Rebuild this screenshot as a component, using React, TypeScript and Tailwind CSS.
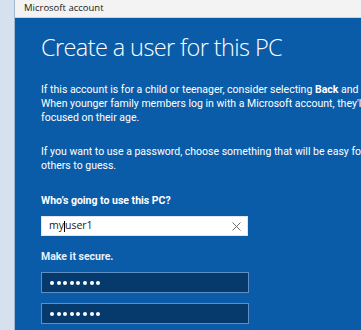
import React from "react";

function Dots() {
  return (
    <div className="flex gap-[2.6px]">
      {[0, 1, 2, 3, 4, 5, 6, 7].map((i) => (
        <span key={i} className="block w-[4px] h-[4px] rounded-full bg-white" />
      ))}
    </div>
  );
}

export default function App() {
  const font = { fontFamily: '"Open Sans", "Noto Sans", sans-serif' };
  const body = { fontFamily: 'Roboto, "Open Sans", sans-serif' };
  return (
    <div className="w-[361px] h-[330px] overflow-hidden flex bg-[#0b5ca8]" style={font}>
      <div className="w-[15px] shrink-0 bg-[#d5e1ee] border-r border-[#9fb7d1]" />
      <div className="flex-1 flex flex-col min-w-0">
        <div className="h-[18px] shrink-0 bg-[#f2f3f2] border-b border-[#bcd6ee] flex items-center pl-[9px] text-[9.5px] text-[#1a1a1a]">
          Microsoft account
        </div>
        <div className="flex-1 pl-[26px] pt-[14px] text-white whitespace-nowrap">
          <div className="text-[23.5px] font-light leading-[30px] tracking-[-0.6px]">Create a user for this PC</div>
          <div className="mt-[21px] text-[10.5px] leading-[14px]" style={body}>
            <div>
              If this account is for a child or teenager, consider selecting <b>Back</b> and create
            </div>
            <div>When younger family members log in with a Microsoft account, they'll get</div>
            <div>focused on their age.</div>
          </div>
          <div className="mt-[20px] text-[10.5px] leading-[14px]" style={body}>
            <div>If you want to use a password, choose something that will be easy for you to remember</div>
            <div>others to guess.</div>
          </div>
          <div className="mt-[21px] text-[10.5px] leading-[14px] font-bold" style={body}>Who’s going to use this PC?</div>
          <div className="mt-[8px] w-[207px] h-[20px] bg-white border border-[#dfe6ee] flex items-center pl-[7px] pr-[6px] text-[10.5px] text-[#1a1a1a]">
            <span>my</span>
            <span className="inline-block w-px h-[11px] bg-black" />
            <span>user1</span>
            <span className="flex-1" />
            <svg width="9" height="9" viewBox="0 0 9 9" className="shrink-0">
              <path d="M0.5 0.5 L8.5 8.5 M8.5 0.5 L0.5 8.5" stroke="#6b6b6b" strokeWidth="1" />
            </svg>
          </div>
          <div className="mt-[14px] text-[10.5px] leading-[14px] font-bold text-[#e6f0fb]" style={body}>Make it secure.</div>
          <div className="mt-[8px] w-[208px] h-[21px] bg-[#063a6c] border border-[#5d8fc2] flex items-center pl-[8px]">
            <Dots />
          </div>
          <div className="mt-[10px] w-[208px] h-[21px] bg-[#063a6c] border border-[#5d8fc2] flex items-center pl-[8px]">
            <Dots />
          </div>
        </div>
      </div>
    </div>
  );
}
